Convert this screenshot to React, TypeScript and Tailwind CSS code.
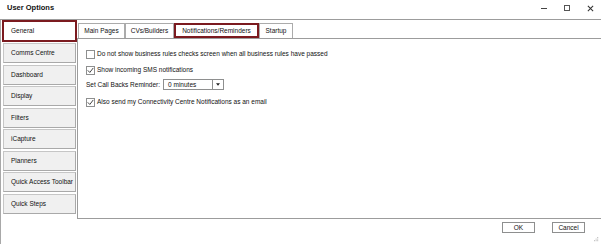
import { useState } from 'react'

const SIDE_ITEMS = [
  'Comms Centre',
  'Dashboard',
  'Display',
  'Filters',
  'iCapture',
  'Planners',
  'Quick Access Toolbar',
  'Quick Steps',
]

const TABS = [
  { label: 'Main Pages', w: 'w-[47px]' },
  { label: 'CVs/Builders', w: 'w-[49px]' },
  { label: 'Notifications/Reminders', w: 'w-[85px]' },
  { label: 'Startup', w: 'w-[34px]' },
]

function Check({ checked, label }: { checked: boolean; label: string }) {
  return (
    <div className="flex h-[10px] items-center gap-[2px]">
      <span className="flex h-[9px] w-[9px] items-center justify-center border border-[#8e8f8f] bg-white">
        {checked && (
          <svg viewBox="0 0 10 10" className="h-[7px] w-[7px]" fill="none" stroke="#333" strokeWidth="1.3">
            <path d="M1.5 5.2 4 7.8 8.6 1.8" strokeLinecap="round" strokeLinejoin="round" />
          </svg>
        )}
      </span>
      <span>{label}</span>
    </div>
  )
}

export default function App() {
  const [tab] = useState(2)
  return (
    <div
      className="flex h-[244px] w-[601px] flex-col overflow-hidden bg-white text-[6.5px] text-[#111]"
      style={{ fontFamily: '"Liberation Sans", Arial, sans-serif' }}
    >
      {/* title bar */}
      <div className="flex h-[20px] shrink-0 items-center border-b border-[#9c9c9c] pl-[7px] pr-[7px]">
        <span className="pb-[3px] text-[7.5px] font-bold text-[#111]">User Options</span>
        <div className="ml-auto flex items-center gap-[17px] pb-[3px] text-[#333]">
          <span className="h-px w-[6px] bg-[#444]" />
          <span className="h-[6px] w-[6px] border border-[#555]" />
          <svg viewBox="0 0 8 8" className="h-[7px] w-[7px]" stroke="#333" strokeWidth="1.2">
            <path d="M1 1 7 7M7 1 1 7" />
          </svg>
        </div>
      </div>

      <div className="flex min-h-0 flex-1">
        {/* left list */}
        <div className="flex w-[77px] shrink-0 flex-col border-l border-[#a8a8a8]">
          <div className="ml-[1px] flex h-[22px] w-[75px] items-center border-2 border-[#7b1a1f] pl-[7px]">
            General
          </div>
          <div className="ml-[2px] mt-[1px] flex w-[73px] flex-col gap-[1.5px]">
            {SIDE_ITEMS.map((s) => (
              <div
                key={s}
                className="flex h-[20px] items-center border border-[#c6c6c6] border-b-[#a9a9a9] border-r-[#a9a9a9] bg-[#f0f0f0] pl-[7px]"
              >
                {s}
              </div>
            ))}
          </div>
        </div>

        {/* right side */}
        <div className="flex min-w-0 flex-1 flex-col">
          <div className="flex h-[18px] shrink-0 items-end pl-[1px]">
            {TABS.map((t, i) => (
              <div
                key={t.label}
                className={`flex h-[15px] items-center justify-center ${t.w} ${
                  i === tab ? 'border-2 border-[#7b1a1f]' : 'border border-b-0 border-[#ababab]'
                } bg-white`}
              >
                {t.label}
              </div>
            ))}
          </div>
          <div className="flex h-[181px] shrink-0 flex-col border-b border-l border-t border-[#9c9c9c] pl-[8px] pt-[10px]">
            <Check checked={false} label="Do not show business rules checks screen when all business rules have passed" />
            <div className="mt-[6px]">
              <Check checked label="Show incoming SMS notifications" />
            </div>
            <div className="mt-[4px] flex items-center gap-[3px]">
              <span>Set Call Backs Reminder:</span>
              <div className="flex h-[11px] w-[61px] items-stretch border border-[#8e8f8f] bg-white">
                <span className="flex flex-1 items-center pl-[4px]">0 minutes</span>
                <span className="flex w-[11px] items-center justify-center border-l border-[#8e8f8f]">
                  <svg viewBox="0 0 6 4" className="h-[3px] w-[4px]" fill="#222">
                    <path d="M0 0h6L3 4z" />
                  </svg>
                </span>
              </div>
            </div>
            <div className="mt-[7px]">
              <Check checked label="Also send my Connectivity Centre Notifications as an email" />
            </div>
          </div>

          {/* footer */}
          <div className="relative flex flex-1 items-start justify-end gap-[17px] pr-[16px] pt-[3px]">
            <button className="flex h-[11px] w-[33px] items-center justify-center border border-[#8e8f8f] bg-white text-[6.5px] text-[#111]">
              OK
            </button>
            <button className="flex h-[11px] w-[33px] items-center justify-center border border-[#8e8f8f] bg-white text-[6.5px] text-[#111]">
              Cancel
            </button>
            <svg viewBox="0 0 6 6" className="absolute bottom-[2px] right-[2px] h-[5px] w-[5px]" fill="#999">
              <rect x="4" y="0" width="1" height="1" />
              <rect x="2" y="2" width="1" height="1" />
              <rect x="4" y="2" width="1" height="1" />
              <rect x="0" y="4" width="1" height="1" />
              <rect x="2" y="4" width="1" height="1" />
              <rect x="4" y="4" width="1" height="1" />
            </svg>
          </div>
        </div>
      </div>
    </div>
  )
}
